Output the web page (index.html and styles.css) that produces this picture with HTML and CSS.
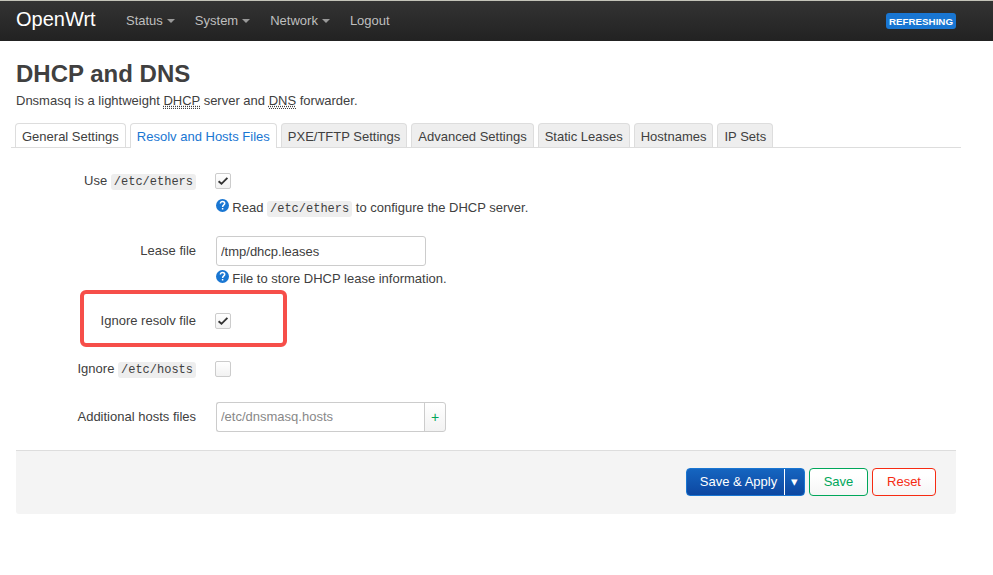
FILE: index.html
```html
<!DOCTYPE html>
<html lang="en">
<head>
<meta charset="utf-8">
<title>OpenWrt - DHCP and DNS</title>
<link rel="stylesheet" href="styles.css">
</head>
<body>
<svg class="defs" aria-hidden="true">
  <symbol id="help" viewBox="0 0 13 13"><circle cx="6.5" cy="6.5" r="6.5" fill="#1976d2"/><path d="M4.4 4.6C4.4 3.2 5.3 2.5 6.5 2.5S8.7 3.2 8.7 4.5C8.7 6 6.6 5.9 6.6 7.9M6.6 9v1.6" fill="none" stroke="#fff" stroke-width="1.5"/></symbol>
  <symbol id="check" viewBox="0 0 14 14"><path d="M2.6 7.2 5.5 9.8 11.4 3.8" fill="none" stroke="#333" stroke-width="1.9"/></symbol>
</svg>
<header class="topbar">
  <a class="brand">OpenWrt</a>
  <nav class="menu">
    <a class="drop">Status</a><a class="drop">System</a><a class="drop">Network</a><a>Logout</a>
  </nav>
  <span class="badge">REFRESHING</span>
</header>
<main class="page">
  <h2>DHCP and DNS</h2>
  <p class="descr">Dnsmasq is a lightweight <abbr>DHCP</abbr> server and <abbr>DNS</abbr> forwarder.</p>
  <ul class="tabs">
    <li class="plain">General Settings</li><li class="active">Resolv and Hosts Files</li><li>PXE/TFTP Settings</li><li>Advanced Settings</li><li>Static Leases</li><li>Hostnames</li><li>IP Sets</li>
  </ul>
  <form class="form">
    <div class="row tall">
      <label>Use <code>/etc/ethers</code></label>
      <div class="field">
        <span class="check"><svg><use href="#check"/></svg></span>
        <div class="help"><svg><use href="#help"/></svg>Read <code>/etc/ethers</code> to configure the DHCP server.</div>
      </div>
    </div>
    <div class="row tall">
      <label>Lease file</label>
      <div class="field text">
        <input type="text" value="/tmp/dhcp.leases">
        <div class="help"><svg><use href="#help"/></svg>File to store DHCP lease information.</div>
      </div>
    </div>
    <div class="row marked">
      <label>Ignore resolv file</label>
      <div class="field"><span class="check"><svg><use href="#check"/></svg></span></div>
    </div>
    <div class="row">
      <label>Ignore <code>/etc/hosts</code></label>
      <div class="field"><span class="check"></span></div>
    </div>
    <div class="row last">
      <label>Additional hosts files</label>
      <div class="field text list"><input type="text" placeholder="/etc/dnsmasq.hosts"><span class="add">+</span></div>
    </div>
  </form>
  <footer class="actions">
    <div class="split"><span class="apply">Save &amp; Apply</span><span class="arrow">▾</span></div>
    <button class="save">Save</button>
    <button class="reset">Reset</button>
  </footer>
</main>
</body>
</html>
```
FILE: styles.css
```css
*, *::before, *::after { box-sizing: border-box; }
body { margin: 0; background: #fff; color: #404040; font: 13px/18px "Liberation Sans", Arial, sans-serif; }
.defs { display: none; }
.topbar { display: flex; height: 41px; padding: 0 37px 0 16px; border-top: 1px solid #c3c3b8; background: linear-gradient(#333, #222); }
.brand { width: 100px; color: #fff; font-size: 20px; line-height: 20px; padding-top: 8px; }
.menu { display: flex; flex: 1; color: #bfbfbf; padding: 11px 0 0 10px; }
.menu a { margin-right: 20px; }
.drop::after { content: ""; display: inline-block; box-sizing: content-box; margin-left: 4px; vertical-align: 2px; border: 4px solid transparent; border-top-color: #999; border-bottom: 0; }
.badge { height: 16px; margin-top: 12px; padding: 1px 3px; border-radius: 3px; background: #1976d2; color: #fff; font-size: 9.75px; font-weight: bold; line-height: 16px; }
.page { width: 940px; margin-left: 16px; }
h2 { margin: 0; padding-top: 15px; font-size: 24px; line-height: 36px; }
.descr { margin: 0; line-height: 18px; height: 31px; }
abbr { border-bottom: 1px dotted #404040; text-decoration: underline dotted; }
.tabs { display: flex; gap: 4px; width: 950px; height: 25px; margin: 0 0 15px -5px; padding: 0 0 0 4px; list-style: none; border-bottom: 1px solid #ddd; }
.tabs li { height: 24px; padding: 4px 6px 0; border: 1px solid #ddd; border-bottom: 0; border-radius: 4px 4px 0 0; background: #eee; white-space: nowrap; }
.tabs .plain { background: #fff; }
.tabs .active { height: 25px; background: #fff; color: #1976d2; }
.row { display: flex; height: 48px; }
.tall { height: 70px; }
.last { height: 51px; }
label { width: 180px; padding-top: 9px; text-align: right; }
code { padding: 1px 3px; border-radius: 3px; background: #eee; font: 12px/18px "Liberation Mono", monospace; }
.field { padding: 10px 0 0 19px; }
.check { display: block; width: 16px; height: 16px; border: 1px solid #ccc; border-radius: 2px; background: linear-gradient(#fff, #f2f2f2); }
.check svg { display: block; width: 14px; height: 14px; }
.help { margin: 10px 0 0 1px; white-space: nowrap; }
.help svg { width: 13px; height: 13px; margin-right: 3.3px; vertical-align: 0; }
.text { padding: 3px 0 0 20px; }
.text .help { margin: 4px 0 0; }
input { display: block; width: 210px; height: 30px; padding: 4px; border: 1px solid #ccc; border-radius: 3px; background: #fff; color: #404040; font: inherit; outline: 0; }
input::placeholder { color: #888; opacity: 1; }
.list { display: flex; align-items: flex-start; }
.list input { width: 209px; padding: 3px 4px 5px; border-radius: 3px 0 0 3px; border-right: 0; }
.add { width: 22px; height: 30px; margin-left: -1px; border: 1px solid #ccc; border-radius: 0 3px 3px 0; background: linear-gradient(#fff, #f2f2f2); color: #00a65a; font-size: 14px; line-height: 29px; text-align: center; }
.marked { position: relative; }
.marked::after { content: ""; position: absolute; left: 64px; top: -13px; width: 207px; height: 57px; border: 4px solid #f64e49; border-radius: 6px; }
.actions { display: flex; justify-content: flex-end; gap: 4px; height: 64px; padding: 17px 20px 0; border-top: 1px solid #ddd; border-radius: 0 0 3px 3px; background: #f4f4f4; }
.split { display: flex; width: 119px; height: 28px; border: 1px solid #1976d2; border-radius: 4px; background: linear-gradient(#1565c0, #0d47a1); color: #fff; line-height: 26px; text-align: center; }
.apply { width: 98px; padding-left: 6px; border-right: 1px solid #fff; }
.arrow { flex: 1; }
button { width: 59px; height: 28px; padding: 0; border: 1px solid #00a65a; border-radius: 4px; background: linear-gradient(#fff 25%, #f5f5f5); color: #00a65a; font: inherit; }
.reset { width: 64px; border-color: #f62b12; color: #f62b12; }
```
